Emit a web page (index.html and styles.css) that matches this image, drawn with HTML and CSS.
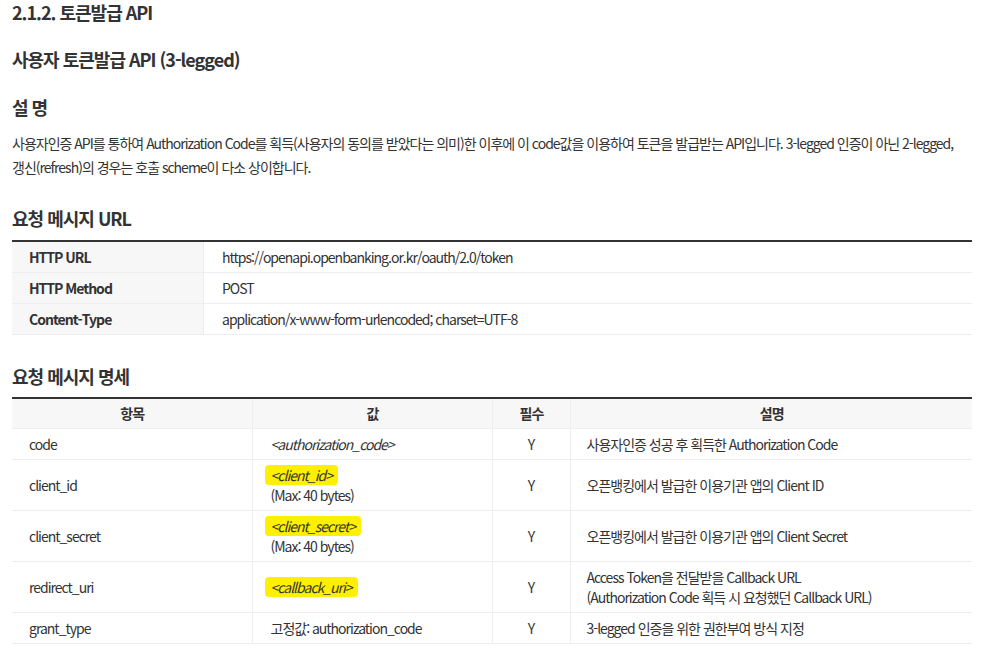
FILE: index.html
```html
<!DOCTYPE html>
<html lang="ko">
<head>
<meta charset="utf-8">
<title>토큰발급 API</title>
<link rel="stylesheet" href="styles.css">
</head>
<body>
<div class="page">
  <h1 class="title">2.1.2. 토큰발급 API</h1>
  <h2 class="subtitle">사용자 토큰발급 API (3-legged)</h2>
  <h3 class="section">설 명</h3>
  <p class="desc">사용자인증 API를 통하여 Authorization Code를 획득(사용자의 동의를 받았다는 의미)한 이후에 이 code값을 이용하여 토큰을 발급받는 API입니다. 3-legged 인증이 아닌 2-legged, 갱신(refresh)의 경우는 호출 scheme이 다소 상이합니다.</p>

  <h3 class="section sec-url">요청 메시지 URL</h3>
  <table class="tbl info">
    <tr><th>HTTP URL</th><td>https://openapi.openbanking.or.kr/oauth/2.0/token</td></tr>
    <tr><th>HTTP Method</th><td>POST</td></tr>
    <tr><th>Content-Type</th><td>application/x-www-form-urlencoded; charset=UTF-8</td></tr>
  </table>

  <h3 class="section sec-spec">요청 메시지 명세</h3>
  <table class="tbl spec">
    <colgroup>
      <col class="c1"><col class="c2"><col class="c3"><col class="c4">
    </colgroup>
    <thead>
      <tr><th>항목</th><th>값</th><th>필수</th><th>설명</th></tr>
    </thead>
    <tbody>
      <tr><td>code</td><td><em>&lt;authorization_code&gt;</em></td><td class="ctr">Y</td><td>사용자인증 성공 후 획득한 Authorization Code</td></tr>
      <tr><td>client_id</td><td><em class="hl">&lt;client_id&gt;</em><br>(Max: 40 bytes)</td><td class="ctr">Y</td><td>오픈뱅킹에서 발급한 이용기관 앱의 Client ID</td></tr>
      <tr><td>client_secret</td><td><em class="hl">&lt;client_secret&gt;</em><br>(Max: 40 bytes)</td><td class="ctr">Y</td><td>오픈뱅킹에서 발급한 이용기관 앱의 Client Secret</td></tr>
      <tr><td>redirect_uri</td><td><em class="hl">&lt;callback_uri&gt;</em></td><td class="ctr">Y</td><td>Access Token을 전달받을 Callback URL<br>(Authorization Code 획득 시 요청했던 Callback URL)</td></tr>
      <tr><td>grant_type</td><td>고정값: authorization_code</td><td class="ctr">Y</td><td>3-legged 인증을 위한 권한부여 방식 지정</td></tr>
    </tbody>
  </table>
</div>
</body>
</html>
```

FILE: styles.css
```css
html, body {
  margin: 0;
  padding: 0;
  background: #fff;
}
body {
  font-family: "Noto Sans CJK KR", "Noto Sans", sans-serif;
  color: #333;
  letter-spacing: -1px;
}
.page {
  width: 960px;
  padding: 0 19px 0 12px;
}
.title {
  font-size: 18px;
  font-weight: 700;
  line-height: 24px;
  margin: 0;
}
.subtitle {
  font-size: 18px;
  font-weight: 700;
  line-height: 24px;
  margin: 23px 0 0;
}
.section {
  font-size: 18px;
  font-weight: 700;
  line-height: 24px;
  margin: 24px 0 0;
}
.desc {
  font-size: 14px;
  line-height: 24px;
  margin: 12px 0 0;
  word-break: keep-all;
}
.sec-url {
  margin-top: 27px;
}
.sec-spec {
  margin-top: 29px;
}
.tbl {
  width: 960px;
  border-collapse: collapse;
  border-top: 2px solid #333;
  font-size: 14px;
  margin-top: 10px;
}
.tbl th, .tbl td {
  border-bottom: 1px solid #eee;
  line-height: 20px;
  padding: 5px 16px 5px 17px;
  text-align: left;
  vertical-align: middle;
}
.info th {
  width: 158px;
  background: #f7f7f7;
  font-weight: 700;
  border-right: 1px solid #eee;
}
.info td {
  padding-left: 18px;
}
.spec {
  margin-top: 9px;
}
.spec col.c1 { width: 240px; }
.spec col.c2 { width: 240px; }
.spec col.c3 { width: 78px; }
.spec col.c4 { width: 402px; }
.spec th {
  background: #f7f7f7;
  font-weight: 700;
  text-align: center;
  border-right: 1px solid #eee;
  padding-top: 4px;
  padding-bottom: 5px;
}
.spec td {
  border-right: 1px solid #eee;
}
.spec th:last-child, .spec td:last-child {
  border-right: 0;
}
.spec td:nth-child(2) {
  padding-left: 18px;
}
.spec td.ctr {
  text-align: center;
  padding-left: 5px;
  padding-right: 5px;
}
.spec td:last-child {
  padding-left: 16px;
}
.spec em {
  font-style: italic;
}
.hl {
  background: #fff000;
  padding: 0 6px;
  margin-left: -6px;
  border-radius: 4px;
}
```
